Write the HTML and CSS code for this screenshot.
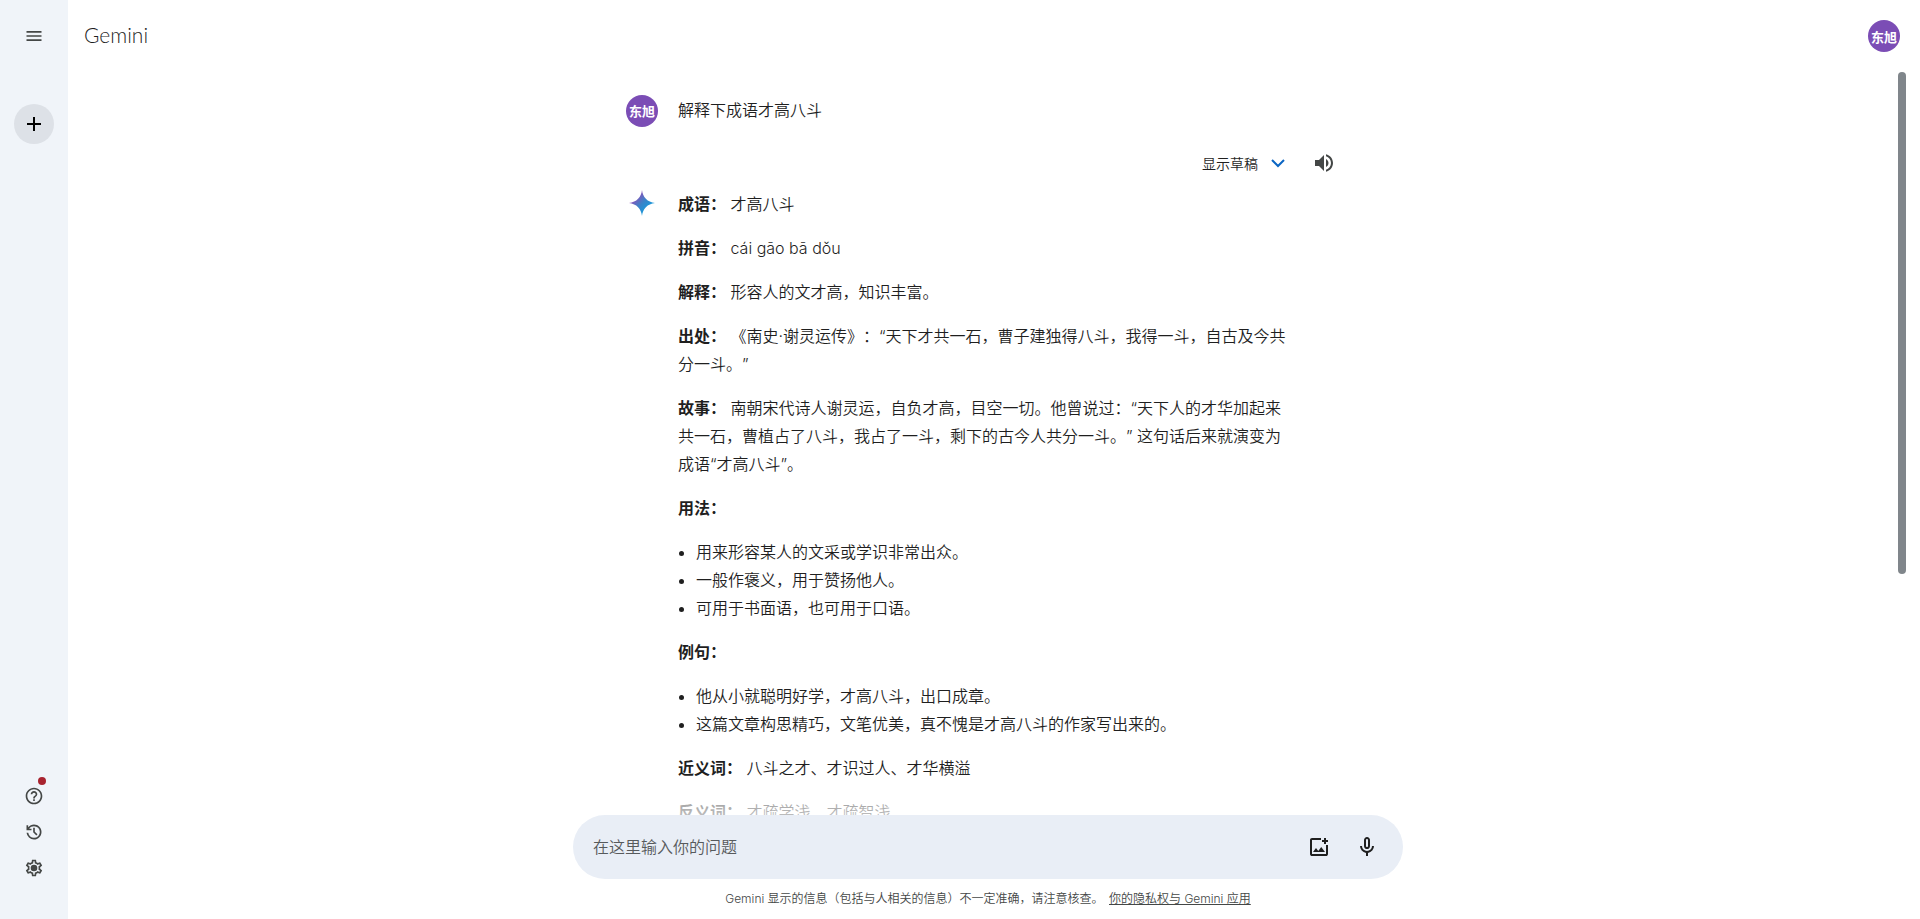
FILE: index.html
```html
<!DOCTYPE html>
<html lang="zh-CN">
<head>
    <meta charset="UTF-8">
    <meta name="viewport" content="width=device-width, initial-scale=1.0">
    <title>Gemini</title>
    <link rel="stylesheet" href="styles.css">
</head>
<body>
    <nav class="sidebar">
        <button class="icon-btn" aria-label="菜单">
            <svg width="20" height="20" viewBox="0 0 24 24"><path d="M3 18h18v-2H3v2zm0-5h18v-2H3v2zm0-7v2h18V6H3z"/></svg>
        </button>
        <button class="new-chat" aria-label="新对话">
            <svg width="24" height="24" viewBox="0 0 24 24"><path d="M19 13h-6v6h-2v-6H5v-2h6V5h2v6h6v2z"/></svg>
        </button>
        <div class="sidebar-bottom">
            <button class="icon-btn" aria-label="帮助">
                <svg width="20" height="20" viewBox="0 0 24 24"><path d="M11 18h2v-2h-2v2zm1-16C6.48 2 2 6.48 2 12s4.48 10 10 10 10-4.48 10-10S17.520 2 12 2zm0 18c-4.410 0-8-3.590-8-8s3.590-8 8-8 8 3.590 8 8-3.590 8-8 8zm0-14c-2.210 0-4 1.790-4 4h2c0-1.100.9-2 2-2s2 .9 2 2c0 2-3 1.750-3 5h2c0-2.250 3-2.500 3-5 0-2.210-1.790-4-4-4z"/></svg>
                <span class="dot"></span>
            </button>
            <button class="icon-btn" aria-label="活动记录">
                <svg width="20" height="20" viewBox="0 0 24 24"><path d="M12 21q-3.450 0-6.012-2.287T3.050 13H5.100q.35 2.600 2.313 4.300T12 19q2.925 0 4.963-2.037T19 12t-2.037-4.962T12 5q-1.725 0-3.225.8T6.250 8H9v2H3V4h2v2.350q1.275-1.600 3.113-2.475T12 3q1.875 0 3.513.713t2.850 1.924 1.925 2.850T21 12t-.712 3.513-1.925 2.850-2.850 1.925T12 21m2.800-4.800L11 12.400V7h2v4.600l3.200 3.200z"/></svg>
            </button>
            <button class="icon-btn" aria-label="设置">
                <svg width="20" height="20" viewBox="0 0 24 24"><path d="M19.430 12.980c.04-.32.07-.64.07-.98 0-.34-.03-.66-.07-.98l2.110-1.650c.19-.15.24-.42.12-.64l-2-3.460c-.09-.16-.26-.25-.44-.25-.06 0-.12.01-.17.03l-2.490 1c-.52-.4-1.080-.73-1.690-.98l-.38-2.650C14.460 2.180 14.250 2 14 2h-4c-.25 0-.46.18-.49.42l-.38 2.650c-.61.25-1.170.59-1.690.98l-2.490-1c-.06-.02-.12-.03-.18-.03-.17 0-.34.09-.43.25l-2 3.460c-.13.22-.07.49.12.64l2.110 1.650c-.04.32-.07.65-.07.98 0 .33.03.66.07.98l-2.110 1.650c-.19.15-.24.42-.12.64l2 3.460c.09.16.26.25.44.25.06 0 .12-.01.17-.03l2.490-1c.52.4 1.080.73 1.690.98l.38 2.650c.03.24.24.42.49.42h4c.25 0 .46-.18.49-.42l.38-2.650c.61-.25 1.170-.59 1.690-.98l2.490 1c.06.02.12.03.18.03.17 0 .34-.09.43-.25l2-3.460c.12-.22.07-.49-.12-.64l-2.110-1.650zm-1.980-1.710c.04.31.05.52.05.73 0 .21-.02.43-.05.73l-.14 1.130.89.7 1.080.84-.7 1.210-1.270-.51-1.040-.42-.9.68c-.43.32-.84.56-1.250.73l-1.060.43-.16 1.130-.2 1.350h-1.400l-.19-1.350-.16-1.130-1.060-.43c-.43-.18-.83-.41-1.230-.71l-.91-.7-1.060.43-1.270.51-.7-1.210 1.080-.84.89-.7-.14-1.130c-.03-.31-.05-.54-.05-.74s.02-.43.05-.73l.14-1.130-.89-.7-1.080-.84.7-1.210 1.270.51 1.040.42.9-.68c.43-.32.84-.56 1.250-.73l1.060-.43.16-1.130.2-1.350h1.390l.19 1.350.16 1.130 1.060.43c.43.18.83.41 1.230.71l.91.7 1.060-.43 1.270-.51.7 1.210-1.070.85-.89.7.14 1.130z"/><circle cx="12" cy="12" r="4"/></svg>
            </button>
        </div>
    </nav>

    <div class="main">
        <header class="top-bar">
            <h1 class="logo">Gemini</h1>
            <button class="avatar">东旭</button>
        </header>

        <main class="chat">
            <div class="conversation">
                <div class="message">
                    <span class="avatar">东旭</span>
                    <div class="text"><p>解释下成语才高八斗</p></div>
                </div>

                <div class="drafts">
                    <button class="drafts-btn">
                        显示草稿
                        <svg width="24" height="24" viewBox="0 0 24 24"><path d="M6 9l6 6 6-6"/></svg>
                    </button>
                    <button class="icon-btn" aria-label="朗读">
                        <svg width="24" height="24" viewBox="0 0 24 24"><path d="M3 9v6h4l5 5V4L7 9H3zm13.500 3c0-1.770-1.020-3.290-2.500-4.030v8.050c1.480-.73 2.500-2.250 2.500-4.020zM14 3.230v2.060c2.890.86 5 3.540 5 6.710s-2.110 5.850-5 6.710v2.060c4.010-.91 7-4.490 7-8.770s-2.990-7.860-7-8.770z"/></svg>
                    </button>
                </div>

                <div class="message">
                    <svg class="spark" width="32" height="28" viewBox="0 0 32 28">
                        <defs>
                            <linearGradient id="spark" x1="0" y1="0" x2="1" y2="1">
                                <stop offset="0.25" stop-color="#8a4fb8"/>
                                <stop offset="0.5" stop-color="#3b82c8"/>
                                <stop offset="0.7" stop-color="#1e96d8"/>
                            </linearGradient>
                        </defs>
                        <path fill="url(#spark)" d="M16 1c.6 7 5.500 12.200 13 13-7.500.8-12.400 6-13 13-.6-7-5.500-12.200-13-13C10.500 13.200 15.400 8 16 1z"/>
                    </svg>
                    <div class="text">
                        <p><strong>成语：</strong> 才高八斗</p>
                        <p><strong>拼音：</strong> cái gāo bā dǒu</p>
                        <p><strong>解释：</strong> 形容人的文才高，知识丰富。</p>
                        <p><strong>出处：</strong> 《南史·谢灵运传》：“天下才共一石，曹子建独得八斗，我得一斗，自古及今共分一斗。”</p>
                        <p><strong>故事：</strong> 南朝宋代诗人谢灵运，自负才高，目空一切。他曾说过：“天下人的才华加起来共一石，曹植占了八斗，我占了一斗，剩下的古今人共分一斗。” 这句话后来就演变为成语“才高八斗”。</p>
                        <p><strong>用法：</strong></p>
                        <ul>
                            <li>用来形容某人的文采或学识非常出众。</li>
                            <li>一般作褒义，用于赞扬他人。</li>
                            <li>可用于书面语，也可用于口语。</li>
                        </ul>
                        <p><strong>例句：</strong></p>
                        <ul>
                            <li>他从小就聪明好学，才高八斗，出口成章。</li>
                            <li>这篇文章构思精巧，文笔优美，真不愧是才高八斗的作家写出来的。</li>
                        </ul>
                        <p><strong>近义词：</strong> 八斗之才、才识过人、才华横溢</p>
                        <p><strong>反义词：</strong> 才疏学浅、才疏智浅</p>
                    </div>
                </div>
            </div>
            <div class="scroll-thumb"></div>
        </main>

        <footer class="bottom">
            <form class="composer">
                <input type="text" placeholder="在这里输入你的问题" aria-label="在这里输入你的问题">
                <button type="button" aria-label="上传图片">
                    <svg width="24" height="24" viewBox="0 0 24 24"><path d="M5 21q-.825 0-1.412-.587T3 19V5q0-.825.588-1.412T5 3h9v2H5v14h14v-9h2v9q0 .825-.587 1.413T19 21zm1-4h12l-3.750-5-3 4L9 13zm11-8V7h-2V5h2V3h2v2h2v2h-2v2z"/></svg>
                </button>
                <button type="button" aria-label="语音输入">
                    <svg width="24" height="24" viewBox="0 0 24 24"><path d="M12 14q-1.250 0-2.125-.875T9 11V5q0-1.250.875-2.125T12 2t2.125.875T15 5v6q0 1.250-.875 2.125T12 14m-1 7v-3.075q-2.600-.35-4.300-2.325T5 11h2q0 2.075 1.463 3.538T12 16t3.538-1.463T17 11h2q0 2.625-1.700 4.600T13 17.925V21zm1-9q.425 0 .713-.288T13 11V5q0-.425-.287-.712T12 4t-.712.288T11 5v6q0 .425.288.713T12 12"/></svg>
                </button>
            </form>
            <p class="disclaimer">Gemini 显示的信息（包括与人相关的信息）不一定准确，请注意核查。 <a href="#">你的隐私权与 Gemini 应用</a></p>
        </footer>
    </div>
</body>
</html>
```
FILE: styles.css
```css
* {
    margin: 0;
    padding: 0;
    box-sizing: border-box;
}

body {
    display: flex;
    height: 100vh;
    background: #fff;
    color: #1f1f1f;
    font-family: Inter, "Noto Sans CJK SC", sans-serif;
    font-size: 16px;
    line-height: 28px;
    text-spacing-trim: space-all;
}

button {
    border: none;
    background: none;
    font-family: inherit;
    color: inherit;
    cursor: pointer;
}

svg {
    display: block;
    fill: currentColor;
}

/* sidebar */
.sidebar {
    width: 68px;
    flex-shrink: 0;
    background: #f0f4f9;
    color: #444746;
    display: flex;
    flex-direction: column;
    align-items: center;
    padding: 18px 0 33px;
}

.icon-btn {
    position: relative;
    width: 40px;
    height: 36px;
    display: flex;
    align-items: center;
    justify-content: center;
}

.new-chat {
    width: 40px;
    height: 40px;
    margin-top: 50px;
    border-radius: 50%;
    background: #dde1e7;
    color: #000;
    display: flex;
    align-items: center;
    justify-content: center;
}

.sidebar-bottom {
    margin-top: auto;
}

.dot {
    position: absolute;
    top: -1px;
    right: 8px;
    width: 8px;
    height: 8px;
    border-radius: 50%;
    background: #a8232f;
}

/* main column */
.main {
    flex: 1;
    min-width: 0;
    display: flex;
    flex-direction: column;
    padding-right: 12px;
}

.top-bar {
    height: 72px;
    flex-shrink: 0;
    display: flex;
    align-items: center;
    justify-content: space-between;
    padding: 0 8px 0 16px;
}

.logo {
    padding-bottom: 2px;
    font-family: Lato, sans-serif;
    font-size: 21px;
    font-weight: 300;
    color: #1f1f1f;
}

.avatar {
    width: 32px;
    height: 32px;
    flex-shrink: 0;
    border-radius: 50%;
    background: #7b4db5;
    color: #fff;
    font-size: 13px;
    font-weight: 700;
    display: flex;
    align-items: center;
    justify-content: center;
}

.chat {
    position: relative;
    flex: 1;
    min-height: 0;
    overflow: hidden;
}

/* fades the text out above the prompt box */
.chat::after {
    content: "";
    position: absolute;
    left: 0;
    right: 24px;
    bottom: 0;
    height: 30px;
    background: linear-gradient(rgba(255, 255, 255, 0), rgba(255, 255, 255, 0.6) 60%, rgba(255, 255, 255, 0.7));
}

.scroll-thumb {
    position: absolute;
    top: 0;
    right: 2px;
    width: 8px;
    height: 502px;
    border-radius: 4px;
    background: #80868b;
}

.conversation {
    max-width: 724px;
    margin: 0 auto;
    padding-top: 23px;
}

.message {
    display: flex;
    gap: 20px;
}

.spark {
    flex-shrink: 0;
}

.text {
    max-width: 612px;
    padding-top: 1px;
    font-weight: 350;
}

.text p,
.text ul {
    margin-bottom: 16px;
}

.text > :last-child {
    margin-bottom: 0;
}

.text strong {
    font-weight: 700;
}

.text ul {
    padding-left: 18px;
}

.drafts {
    display: flex;
    justify-content: flex-end;
    align-items: center;
    gap: 14px;
    margin: 18px 6px 8px 0;
}

.drafts .icon-btn {
    color: #444746;
}

.drafts-btn {
    display: flex;
    align-items: center;
    gap: 8px;
    font-size: 14px;
    font-weight: 350;
}

.drafts-btn svg {
    fill: none;
    stroke: #0b66c3;
    stroke-width: 2;
}

/* prompt box */
.bottom {
    flex-shrink: 0;
}

.composer {
    max-width: 830px;
    height: 64px;
    margin: 0 auto;
    padding: 0 12px 0 20px;
    border-radius: 32px;
    background: #e9eef6;
    display: flex;
    align-items: center;
}

.composer input {
    flex: 1;
    min-width: 0;
    border: none;
    outline: none;
    background: none;
    font-family: inherit;
    font-size: 16px;
    font-weight: 350;
}

.composer input::placeholder {
    color: #575a5c;
}

.composer button {
    width: 48px;
    height: 48px;
    display: flex;
    align-items: center;
    justify-content: center;
}

.disclaimer {
    padding: 12px 0;
    font-size: 12px;
    font-weight: 350;
    line-height: 16px;
    text-align: center;
    color: #444746;
}

.disclaimer a {
    color: inherit;
    margin-left: 2px;
}
```
